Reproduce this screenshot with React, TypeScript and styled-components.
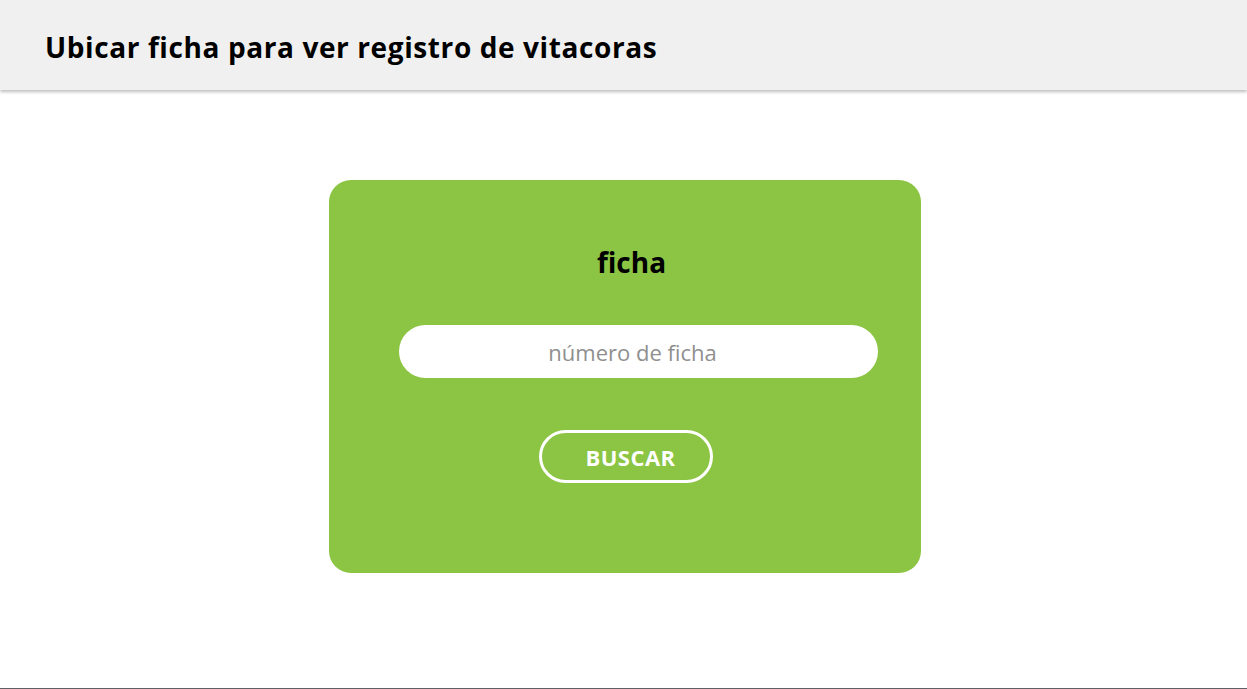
import styled, { createGlobalStyle } from "styled-components";

const GlobalStyle = createGlobalStyle`
  * {
    box-sizing: border-box;
  }
  body {
    margin: 0;
    font-family: "Open Sans", "Noto Sans", sans-serif;
    background: #ffffff;
  }
`;

const Page = styled.div`
  height: 100vh;
  display: flex;
  flex-direction: column;
  border-bottom: 1px solid #5f5f66;
`;

const Header = styled.header`
  height: 90px;
  flex-shrink: 0;
  display: flex;
  align-items: center;
  padding: 4px 45px 0;
  background: #f0f0f0;
  box-shadow: 0 2px 3px rgba(0, 0, 0, 0.25);
  position: relative;
`;

const HeaderTitle = styled.h1`
  margin: 0;
  font-size: 28px;
  font-weight: 700;
  letter-spacing: 0.6px;
  color: #000;
`;

const Main = styled.main`
  flex: 1;
  display: flex;
  justify-content: center;
  padding: 90px 0 0 2px;
`;

const Card = styled.form`
  width: 592px;
  height: 393px;
  background: #8bc543;
  border-radius: 22px;
  display: flex;
  flex-direction: column;
  align-items: center;
  padding: 62px 0 0 14px;
`;

const CardTitle = styled.h2`
  margin: 0;
  font-size: 28px;
  font-weight: 700;
  line-height: 40px;
  color: #000;
`;

const FichaInput = styled.input`
  margin: 43px 0 0 14px;
  width: 479px;
  height: 53px;
  border: none;
  border-radius: 27px;
  background: #fff;
  font-family: inherit;
  font-size: 22px;
  text-align: center;
  padding: 0 12px 0 0;
  color: #333;
  outline: none;
  &::placeholder {
    color: #8f8f8f;
  }
`;

const SearchButton = styled.button`
  margin: 52px 12px 0 0;
  width: 174px;
  height: 53px;
  border: 3px solid #fff;
  border-radius: 27px;
  background: transparent;
  color: #fff;
  font-family: inherit;
  font-size: 22px;
  font-weight: 700;
  letter-spacing: 0.5px;
  padding: 0 0 0 10px;
  cursor: pointer;
`;

export default function App() {
  return (
    <>
      <GlobalStyle />
      <Page>
        <Header>
          <HeaderTitle>Ubicar ficha para ver registro de vitacoras</HeaderTitle>
        </Header>
        <Main>
          <Card onSubmit={(e) => e.preventDefault()}>
            <CardTitle>ficha</CardTitle>
            <FichaInput type="text" placeholder="número de ficha" />
            <SearchButton type="submit">BUSCAR</SearchButton>
          </Card>
        </Main>
      </Page>
    </>
  );
}
